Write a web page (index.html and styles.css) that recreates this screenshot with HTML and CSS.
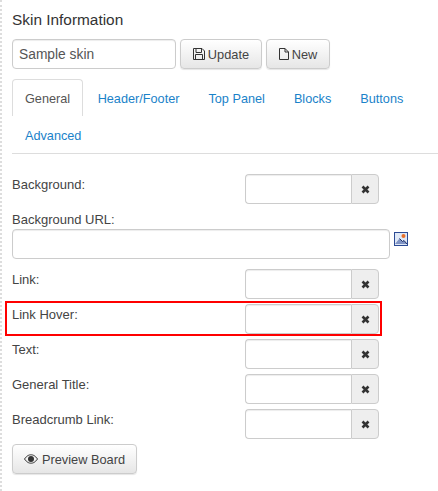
FILE: index.html
```html
<!DOCTYPE html>
<html lang="en">
<head>
<meta charset="utf-8">
<title>Skin Information</title>
<link rel="stylesheet" href="styles.css">
</head>
<body>
<main class="panel">
  <h1 class="title">Skin Information</h1>
  <div class="skin-bar">
    <input class="field skin-name" type="text" value="Sample skin">
    <button class="btn btn-update" type="button">
      <svg class="ico" viewBox="0 0 12 12" width="12" height="12"><path d="M.5.5h8.500l2.500 2.500v8.500h-11z M3 1v3.500h5.500v-3.500 M2.500 11.500v-5h7v5" fill="none" stroke="#333" stroke-width="1"/></svg>
      Update
    </button>
    <button class="btn btn-new" type="button">
      <svg class="ico" viewBox="0 0 10 12" width="10" height="12"><path d="M.5.5h5.500l3.500 3.500v7.500h-9z M6 .5v3.500h3.500" fill="none" stroke="#333" stroke-width="1"/></svg>
      New
    </button>
  </div>
  <nav class="tabs">
    <a class="tab tab-edge active">General</a>
    <a class="tab">Header/Footer</a>
    <a class="tab">Top Panel</a>
    <a class="tab">Blocks</a>
    <a class="tab">Buttons</a>
    <a class="tab tab-edge">Advanced</a>
  </nav>
  <form class="rows">
    <div class="row"><label class="lbl">Background:</label><div class="group"><input class="field grp-input" type="text"><span class="addon"><svg class="x" viewBox="0 0 9 9" width="9" height="9"><path d="M1.500 1.500l6 6M7.500 1.500l-6 6" stroke="#333" stroke-width="2.600" fill="none"/></svg></span></div></div>
    <div class="row-url">
      <label class="lbl">Background URL:</label>
      <div class="url-line">
        <input class="field url-input" type="text">
        <svg class="pic" viewBox="0 0 14 14" width="14" height="14">
          <rect width="14" height="14" fill="#2b4a94"/>
          <rect x="1" y="1" width="12" height="12" fill="#dfe8f6"/>
          <circle cx="9.500" cy="4" r="2" fill="#e8702a"/>
          <path d="M1 12l4.500-5.500 3 3 1.500-1 3 3.500z" fill="#7f93c4"/>
          <path d="M5.500 6.500l3 3 1.500-1 3 3.500" fill="none" stroke="#1d2f66"/>
        </svg>
      </div>
    </div>
    <div class="row"><label class="lbl">Link:</label><div class="group"><input class="field grp-input" type="text"><span class="addon"><svg class="x" viewBox="0 0 9 9" width="9" height="9"><path d="M1.500 1.500l6 6M7.500 1.500l-6 6" stroke="#333" stroke-width="2.600" fill="none"/></svg></span></div></div>
    <div class="row row-marked"><label class="lbl">Link Hover:</label><div class="group"><input class="field grp-input" type="text"><span class="addon"><svg class="x" viewBox="0 0 9 9" width="9" height="9"><path d="M1.500 1.500l6 6M7.500 1.500l-6 6" stroke="#333" stroke-width="2.600" fill="none"/></svg></span></div></div>
    <div class="row"><label class="lbl">Text:</label><div class="group"><input class="field grp-input" type="text"><span class="addon"><svg class="x" viewBox="0 0 9 9" width="9" height="9"><path d="M1.500 1.500l6 6M7.500 1.500l-6 6" stroke="#333" stroke-width="2.600" fill="none"/></svg></span></div></div>
    <div class="row"><label class="lbl">General Title:</label><div class="group"><input class="field grp-input" type="text"><span class="addon"><svg class="x" viewBox="0 0 9 9" width="9" height="9"><path d="M1.500 1.500l6 6M7.500 1.500l-6 6" stroke="#333" stroke-width="2.600" fill="none"/></svg></span></div></div>
    <div class="row"><label class="lbl">Breadcrumb Link:</label><div class="group"><input class="field grp-input" type="text"><span class="addon"><svg class="x" viewBox="0 0 9 9" width="9" height="9"><path d="M1.500 1.500l6 6M7.500 1.500l-6 6" stroke="#333" stroke-width="2.600" fill="none"/></svg></span></div></div>
  </form>
  <button class="btn btn-preview" type="button">
    <svg class="ico ico-eye" viewBox="0 0 14 10" width="14" height="10"><path d="M.5 5C3 1.500 5 .8 7 .8S11 1.500 13.500 5C11 8.500 9 9.200 7 9.200S3 8.500 .5 5z" fill="none" stroke="#333" stroke-width="1"/><circle cx="7" cy="5" r="3" fill="#333"/></svg>
    Preview Board
  </button>
</main>
</body>
</html>
```
FILE: styles.css
```css
* { box-sizing: border-box; }
html, body { margin: 0; padding: 0; }
body {
  background: #fff;
  color: #444;
  font-family: "Liberation Sans", Arial, sans-serif;
  font-size: 13px;
  height: 491px;
  overflow: hidden;
  border-left: 2px dotted #ddd;
}
.panel { padding: 10px 0 0 10px; }
.title {
  margin: 0;
  font-size: 15.4px;
  font-weight: 400;
  line-height: 20px;
  color: #333;
  height: 29px;
}
.field {
  display: block;
  height: 30px;
  border: 1px solid #ccc;
  border-radius: 4px;
  background: #fff;
  box-shadow: inset 0 1px 1px rgba(0,0,0,.075);
  font: 13.800px "Liberation Sans", Arial, sans-serif;
  color: #555;
  padding: 0 6px;
  outline: none;
}
.skin-bar { display: flex; gap: 4px; height: 40px; }
.skin-name { width: 164px; }
.btn {
  display: flex;
  align-items: center;
  justify-content: center;
  gap: 3px;
  height: 30px;
  padding: 0;
  border: 1px solid #ccc;
  border-radius: 4px;
  background: linear-gradient(#fff, #e6e6e6);
  box-shadow: 0 1px 1px rgba(0,0,0,.1);
  font: 12.800px "Liberation Sans", Arial, sans-serif;
  color: #444;
}
.btn-update { width: 82px; }
.btn-new { width: 64px; }
.btn-preview { width: 125px; margin-top: 5px; gap: 4px; }
.ico { flex: none; }
.tabs {
  display: flex;
  flex-wrap: wrap;
  width: 426px;
  height: 75px;
  border-bottom: 1px solid #ddd;
  font-size: 12.700px;
}
.tab {
  height: 37px;
  line-height: 38px;
  padding: 0 13.5px;
  color: #1a82c9;
  border: 1px solid transparent;
  border-bottom: 0;
  white-space: nowrap;
}
.tab-edge { padding: 0 12px; }
.tab.active {
  color: #555;
  border-color: #ddd;
  border-radius: 4px 4px 0 0;
}
.rows { margin-top: 20px; }
.row {
  position: relative;
  display: flex;
  height: 30px;
  margin-bottom: 5px;
}
.lbl { display: block; padding-top: 1px; line-height: 20px; color: #444; white-space: nowrap; }
.row .lbl { width: 233px; }
.group { display: flex; width: 134px; height: 30px; }
.grp-input {
  width: 106px;
  border-right: 0;
  border-radius: 4px 0 0 4px;
}
.addon {
  display: flex;
  align-items: center;
  justify-content: center;
  width: 28px;
  height: 30px;
  background: #eee;
  border: 1px solid #ccc;
  border-radius: 0 4px 4px 0;
}
.row-url { height: 50px; margin-bottom: 10px; }
.row-url .lbl { height: 20px; }
.url-line { display: flex; gap: 4px; }
.url-input { width: 378px; }
.pic { margin-top: 3px; flex: none; }
.row-marked::after {
  content: "";
  position: absolute;
  left: -7px;
  top: -3px;
  width: 377px;
  height: 35px;
  box-sizing: border-box;
  border: 2px solid #f00;
  pointer-events: none;
}
```
